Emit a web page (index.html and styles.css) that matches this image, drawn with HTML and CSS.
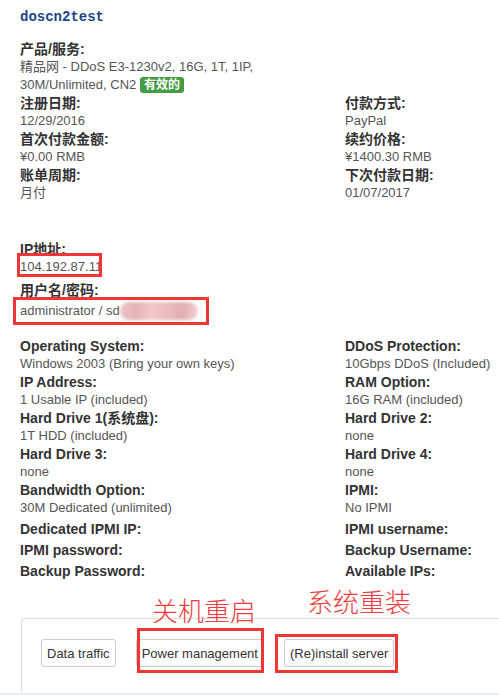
FILE: index.html
```html
<!DOCTYPE html>
<html>
<head lang="zh">
    <meta charset="UTF-8">
    <title>doscn2test</title>
    <link rel="stylesheet" href="styles.css">
</head>
<body>
<div class="page">
    <h1 class="title">doscn2test</h1>

    <div class="field product">
        <div class="label">产品/服务:</div>
        <div class="value">精品网 - DDoS E3-1230v2, 16G, 1T, 1IP, 30M/Unlimited, CN2 <span class="badge">有效的</span></div>
    </div>
    <div class="grid">
        <div class="field"><div class="label">注册日期:</div><div class="value">12/29/2016</div></div>
        <div class="field"><div class="label">付款方式:</div><div class="value">PayPal</div></div>
        <div class="field"><div class="label">首次付款金额:</div><div class="value">¥0.00 RMB</div></div>
        <div class="field"><div class="label">续约价格:</div><div class="value">¥1400.30 RMB</div></div>
        <div class="field"><div class="label">账单周期:</div><div class="value">月付</div></div>
        <div class="field"><div class="label">下次付款日期:</div><div class="value">01/07/2017</div></div>
    </div>

    <div class="access">
        <div class="field"><div class="label">IP地址:</div><div class="value">104.192.87.11</div></div>
        <div class="field user"><div class="label">用户名/密码:</div><div class="value">administrator / sd<span class="blur"></span></div></div>
    </div>

    <div class="grid specs">
        <div class="field"><div class="label">Operating System:</div><div class="value">Windows 2003 (Bring your own keys)</div></div>
        <div class="field"><div class="label">DDoS Protection:</div><div class="value">10Gbps DDoS (Included)</div></div>
        <div class="field"><div class="label">IP Address:</div><div class="value">1 Usable IP (included)</div></div>
        <div class="field"><div class="label">RAM Option:</div><div class="value">16G RAM (included)</div></div>
        <div class="field"><div class="label">Hard Drive 1(系统盘):</div><div class="value">1T HDD (included)</div></div>
        <div class="field"><div class="label">Hard Drive 2:</div><div class="value">none</div></div>
        <div class="field"><div class="label">Hard Drive 3:</div><div class="value">none</div></div>
        <div class="field"><div class="label">Hard Drive 4:</div><div class="value">none</div></div>
        <div class="field"><div class="label">Bandwidth Option:</div><div class="value">30M Dedicated (unlimited)</div></div>
        <div class="field"><div class="label">IPMI:</div><div class="value">No IPMI</div></div>
        <div class="field empty"><div class="label">Dedicated IPMI IP:</div></div>
        <div class="field empty"><div class="label">IPMI username:</div></div>
        <div class="field empty"><div class="label">IPMI password:</div></div>
        <div class="field empty"><div class="label">Backup Username:</div></div>
        <div class="field empty"><div class="label">Backup Password:</div></div>
        <div class="field empty"><div class="label">Available IPs:</div></div>
    </div>

    <div class="panel">
        <button class="btn">Data traffic</button>
        <button class="btn">Power management</button>
        <button class="btn">(Re)install server</button>
    </div>

    <!-- 截图上的标注 -->
    <div class="mark mark-ip"></div>
    <div class="mark mark-user"></div>
    <div class="mark mark-power"></div>
    <div class="mark mark-install"></div>
    <div class="note note-power">关机重启</div>
    <div class="note note-install">系统重装</div>
</div>
<div class="strip"></div>
</body>
</html>
```

FILE: styles.css
```css
* {
    margin: 0;
    padding: 0;
}

html, body {
    overflow: hidden;
}

body {
    background-color: #fff;
    color: #333;
    font-family: "Liberation Sans", "Noto Sans CJK SC", sans-serif;
}

.page {
    position: relative;
    height: 693px;
    padding-left: 20px;
}

.title {
    padding-top: 8px;
    margin-bottom: 14px;
    font-family: "Liberation Mono", monospace;
    font-size: 14px;
    line-height: 18px;
    font-weight: bold;
    color: #1d4486;
}

.label {
    height: 18px;
    font-size: 14px;
    line-height: 18px;
    font-weight: bold;
    color: #333;
}

.value {
    font-size: 13px;
    line-height: 18px;
    color: #555;
}

.product .value {
    width: 262px;
    height: 36px;
}

.badge {
    display: inline-block;
    padding: 0 4px;
    border-radius: 3px;
    background-color: #449d44;
    color: #fff;
    font-size: 12px;
    line-height: 16px;
    font-weight: bold;
    vertical-align: top;
    margin-top: 1px;
}

.grid {
    display: grid;
    grid-template-columns: 325px 1fr;
}

.access {
    margin-top: 38px;
}

.user {
    margin-top: 5px;
}

.user .value {
    height: 18px;
    margin-top: 3px;
}

.blur {
    display: inline-block;
    width: 78px;
    height: 18px;
    vertical-align: top;
    border-radius: 10px;
    background: linear-gradient(90deg, #efc3c6 0%, #e4b2b7 20%, #f2c8cb 40%, #ebbcc0 60%, #e0adb2 80%, #f3d0d2 100%);
    filter: blur(1.5px);
}

.specs {
    margin-top: 17px;
}

.empty {
    margin-top: 3px;
}

.panel {
    display: flex;
    gap: 20px;
    height: 74px;
    margin-top: 38px;
    margin-left: 1px;
    padding: 20px 19px 0;
    box-sizing: border-box;
    border: 1px solid #ddd;
    border-right: none;
    border-bottom: none;
    border-radius: 4px 0 0 0;
}

.btn {
    height: 28px;
    padding: 0 5px;
    border: 1px solid #ccc;
    border-radius: 3px;
    background-color: #fff;
    color: #333;
    font-family: "Liberation Sans", sans-serif;
    font-size: 13px;
}

.strip {
    height: 2px;
    background-color: #e6edf5;
}

/* 红色标注 */
.mark {
    position: absolute;
    border: 3px solid #ee3636;
}

.mark-ip {
    left: 17px;
    top: 253px;
    width: 79px;
    height: 18px;
}

.mark-user {
    left: 13px;
    top: 297px;
    width: 190px;
    height: 22px;
}

.mark-power {
    left: 137px;
    top: 628px;
    width: 121px;
    height: 39px;
}

.mark-install {
    left: 275px;
    top: 634px;
    width: 117px;
    height: 33px;
}

.note {
    position: absolute;
    font-family: "Noto Sans CJK SC", sans-serif;
    font-size: 26px;
    line-height: 26px;
    color: #f03c3c;
    font-weight: 300;
}

.note-power {
    left: 152px;
    top: 597px;
}

.note-install {
    left: 307px;
    top: 588px;
}
```
